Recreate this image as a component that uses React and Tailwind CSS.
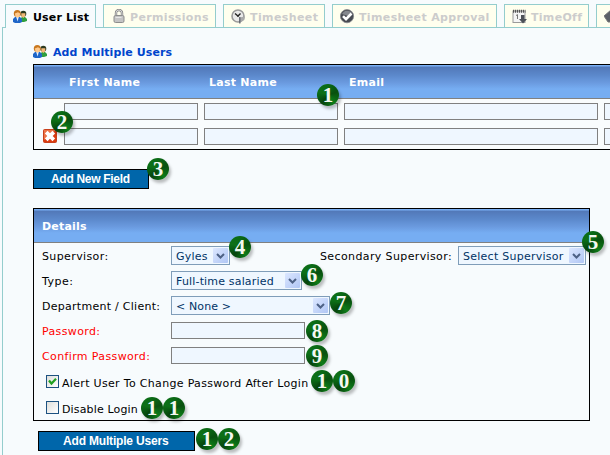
import React from "react";

function UsersIcon() {
  return (
    <svg className="h-[13px] w-[14px] shrink-0" viewBox="0 0 14 13">
      <path d="M7 12V9l2-2h3l2 2v2l-3 1z" fill="#2f9e3f" />
      <circle cx="10.3" cy="3.8" r="3" fill="#2c3a20" />
      <path d="M8.3 3.2h4v2.7l-1.8 2-2.2-1.5z" fill="#f0b878" />
      <path d="M0 12V9l2-2h5l2 2v3l-2 1H2z" fill="#1f66c8" />
      <path d="M3.2 7h2.6l-1.2 4.5z" fill="#e6f0fc" />
      <circle cx="4.3" cy="3.6" r="3.5" fill="#c87820" />
      <path d="M1.9 3.4 5 2.2l2.1 1.4-.5 3-2 1.2-2.1-1.4z" fill="#ffc98c" />
    </svg>
  );
}

function LockIcon() {
  return (
    <svg className="h-[15px] w-3 shrink-0" viewBox="0 0 12 15">
      <path d="M3 7V4a3 3 0 0 1 6 0v3" fill="none" stroke="#858585" strokeWidth="2.4" />
      <path d="M3 7V4a3 3 0 0 1 6 0v3" fill="none" stroke="#d5d5d5" strokeWidth="1" />
      <rect x="1" y="6.5" width="10" height="7" rx="1.5" fill="#c4c4c4" stroke="#8d8d8d" />
      <path d="M2.5 8.5h6" stroke="#e6e6e6" />
    </svg>
  );
}

function ClockIcon() {
  return (
    <svg className="h-[15px] w-[15px] shrink-0" viewBox="0 0 15 15">
      <circle cx="7" cy="7" r="6" fill="#e9e9e9" stroke="#9a9a9a" strokeWidth="1.6" />
      <path d="M4 4.5 7 7l2.5-2.5M7 7v1" fill="none" stroke="#222" strokeWidth="1.4" />
      <path d="M8.5 8.5 14 7.5l-.7 3.5-4.8 3z" fill="#a9a9a9" />
      <path d="M8.8 8V14.5" stroke="#555b66" strokeWidth="1.2" />
    </svg>
  );
}

function ApprovedIcon() {
  return (
    <svg className="h-[15px] w-[15px] shrink-0" viewBox="0 0 15 15">
      <circle cx="7" cy="7.2" r="6.6" fill="#484b52" stroke="#85878c" strokeWidth=".8" />
      <path d="M2 5a6 6 0 0 1 10-1L8 7z" fill="#85888e" />
      <path d="m3 7.2 3 3L11.5 4.5" fill="none" stroke="#fff" strokeWidth="2.6" />
    </svg>
  );
}

function CalendarIcon() {
  return (
    <svg className="h-[15px] w-[15px] shrink-0" viewBox="0 0 15 15">
      <rect x="1" y="2" width="12" height="11.5" fill="#f5f5f5" stroke="#9a9a9a" />
      <path d="M1 2.3h12.5" stroke="#555" strokeWidth="3" strokeDasharray="1.2 .8" />
      <path d="m4 6.6 1.5-1V10" fill="none" stroke="#777" />
      <path d="M9 6h3.5v4H15l-4 4.5L7 10h2z" fill="#4d5158" />
    </svg>
  );
}

const TAB =
  "flex h-[23px] shrink-0 items-center border border-b-0 border-[#94cdcd] pl-[7px] font-bold";

function Tab({ icon, width, iconBox, spacing, active, children }) {
  return (
    <div className={`${TAB} ${width} ${active ? "h-[24px] bg-[#f7fbfd] pb-px text-black" : "bg-[#ffffee] text-[#cccccc]"}`}>
      <span className={`flex shrink-0 ${iconBox}`}>{icon}</span>
      <span className={`pt-[2px] whitespace-nowrap ${spacing}`}>{children}</span>
    </div>
  );
}

const HEADER =
  "flex h-[34px] items-center border-b border-[#808080] bg-[linear-gradient(#79aff5_0px,#79aff5_1px,#5278b8_2px,#5b88cb_10px,#6b9be0_18px,#76adf2_24px,#76adf2_34px)] pt-[2px] font-bold text-white";

function Field({ className }) {
  return <div className={`h-[17px] shrink-0 border border-[#808080] bg-[#eff7ff] ${className}`} />;
}

function Select({ className, spacing, children }) {
  return (
    <div className={`flex h-[19px] shrink-0 items-center justify-between border border-[#7f9db9] bg-[#eff7ff] pr-px pl-1 text-[#003366] ${className}`}>
      <span className={`pt-[2px] whitespace-nowrap ${spacing}`}>{children}</span>
      <span className="flex h-[15px] w-[15px] items-center justify-center rounded-[1px] bg-linear-to-br from-[#dce7ff] to-[#b0c6f4]">
        <svg className="h-[6px] w-[9px]" viewBox="0 0 9 6">
          <path d="m1 1 3.5 3.5L8 1" fill="none" stroke="#4d6185" strokeWidth="2" />
        </svg>
      </span>
    </div>
  );
}

function Checkbox({ checked }) {
  return (
    <span className="flex h-[13px] w-[13px] shrink-0 items-center justify-center border border-[#1d5281] bg-linear-to-br from-[#dedfdb] to-white">
      {checked && (
        <svg className="h-[9px] w-[9px]" viewBox="0 0 9 9">
          <path d="m1 3.5 2.5 3L8 1.8" fill="none" stroke="#21a121" strokeWidth="2.2" />
        </svg>
      )}
    </span>
  );
}

function Button({ className, spacing, children }) {
  return (
    <div className={`flex h-5 items-center border border-black bg-[#0066aa] font-['Liberation_Sans',Arial,sans-serif] text-[12px] font-bold text-white ${className}`}>
      <span className={`whitespace-nowrap ${spacing}`}>{children}</span>
    </div>
  );
}

// Numbered callout discs; each one floats over the form controls.
function Callout({ className, children }) {
  return (
    <div className={`absolute flex h-[22px] w-[22px] items-center justify-center rounded-full bg-[conic-gradient(#0b6b16,#08500f,#0d7a18,#06440c,#0c7017,#0b6b16)] font-['Liberation_Serif','Times_New_Roman',serif] text-[21px] leading-[22px] font-bold text-[#f4f8f2] shadow-[2px_3px_3px_rgba(0,0,0,0.25)] ${className}`}>
      {children}
    </div>
  );
}

function UserRow({ removable }) {
  return (
    <div className="flex h-[17px] gap-[6px]">
      <div className="flex w-6 shrink-0 justify-end pr-px">
        {removable && (
          <svg className="mt-px h-[14px] w-[14px]" viewBox="0 0 14 14">
            <rect x=".5" y=".5" width="13" height="13" rx="1" fill="#dc3c10" stroke="#c8401c" />
            <path d="M1 1h12L1 11z" fill="#ec7448" />
            <path d="m3.2 3.2 7.6 7.6m0-7.6-7.6 7.6" stroke="#fff" strokeWidth="3.8" />
          </svg>
        )}
      </div>
      <Field className="w-[134px]" />
      <Field className="w-[134px]" />
      <Field className="w-[254px]" />
      <Field className="w-[134px]" />
    </div>
  );
}

function Label({ className, children }) {
  return <span className={`w-[129px] shrink-0 pt-[2px] whitespace-nowrap ${className}`}>{children}</span>;
}

export default function App() {
  return (
    <div className="relative h-[455px] w-[610px] overflow-hidden bg-[#f7fbfd] font-['DejaVu_Sans',Verdana,sans-serif] text-[11px] leading-[13px] text-black">
      <div className="flex h-7 items-start bg-[linear-gradient(#94cdcd,#94cdcd)] bg-[length:608px_1px] bg-[position:2px_27px] bg-no-repeat pt-1 pl-[5px]">
        <div className="flex gap-[7px]">
          <Tab active width="w-[91px]" iconBox="w-[20px]" spacing="tracking-[0.15px]" icon={<UsersIcon />}>User List</Tab>
          <Tab width="w-[113px]" iconBox="w-[19px] pl-[2px]" spacing="tracking-[0.35px]" icon={<LockIcon />}>Permissions</Tab>
          <Tab width="w-[102px]" iconBox="w-[19px]" spacing="tracking-[0.4px]" icon={<ClockIcon />}>Timesheet</Tab>
          <Tab width="w-[165px]" iconBox="w-[19px]" spacing="tracking-[0.36px]" icon={<ApprovedIcon />}>Timesheet Approval</Tab>
          <Tab width="w-[85px]" iconBox="w-[19px]" spacing="tracking-[0.3px]" icon={<CalendarIcon />}>TimeOff</Tab>
          <Tab
            width="w-[100px]"
            iconBox="w-[19px]"
            spacing=""
            icon={
              <svg className="h-[14px] w-[14px]" viewBox="0 0 14 14">
                <path d="m0 7 7-6 7 6-4 6H4z" fill="#5c6068" stroke="#777" />
              </svg>
            }
          />
        </div>
      </div>

      <div className="ml-[2px] h-[427px] border-l border-[#94cdcd] pl-[30px]">
        <div className="flex h-9 items-center gap-[6px] pt-[11px] font-bold text-[#0044cc]">
          <UsersIcon />
          <span className="pt-[2px] whitespace-nowrap tracking-[0.09px]">Add Multiple Users</span>
        </div>

        <div className="h-[86px] w-[700px] border border-black bg-[#f9fcfd]">
          <div className={HEADER}>
            <span className="ml-[35px] w-[140px] tracking-[0.35px]">First Name</span>
            <span className="w-[140px] tracking-[0.25px]">Last Name</span>
            <span className="tracking-[0.3px]">Email</span>
          </div>
          <div className="flex flex-col gap-2 pt-1">
            <UserRow />
            <UserRow removable />
          </div>
        </div>

        <Button className="mt-[19px] w-[116px] pl-[17px]" spacing="tracking-[-0.3px]">Add New Field</Button>

        <div className="mt-[19px] h-[213px] w-[557px] border border-black bg-[#f7fbfd]">
          <div className={HEADER}>
            <span className="ml-2 tracking-[0.2px]">Details</span>
          </div>
          <div className="pt-[3px] pl-2">
            <div className="flex h-[19px] items-center">
              <Label className="tracking-[0.38px]">Supervisor:</Label>
              <Select className="w-[59px]" spacing="tracking-[0.25px]">Gyles</Select>
              <span className="ml-[90px] w-[138px] pt-[2px] whitespace-nowrap tracking-[0.38px]">Secondary Supervisor:</span>
              <Select className="w-[128px]" spacing="tracking-[0.26px]">Select Supervisor</Select>
            </div>
            <div className="mt-[6px] flex h-[19px] items-center">
              <Label className="tracking-[0.5px]">Type:</Label>
              <Select className="w-[131px]" spacing="tracking-[0.17px]">Full-time salaried</Select>
            </div>
            <div className="mt-[6px] flex h-[19px] items-center">
              <Label className="tracking-[0.27px]">Department / Client:</Label>
              <Select className="w-[159px]" spacing="tracking-[0.12px]">&lt; None &gt;</Select>
            </div>
            <div className="mt-[7px] flex h-[17px] items-center">
              <Label className="tracking-[0.36px] text-[#ff0000]">Password:</Label>
              <Field className="w-[134px]" />
            </div>
            <div className="mt-2 flex h-[17px] items-center">
              <Label className="tracking-[0.37px] text-[#ff0000]">Confirm Password:</Label>
              <Field className="w-[134px]" />
            </div>
            <div className="mt-[11px] ml-1 flex h-[13px] gap-[3px]">
              <Checkbox checked />
              <span className="pt-[2px] whitespace-nowrap tracking-[0.32px]">Alert User To Change Password After Login</span>
            </div>
            <div className="mt-[13px] ml-1 flex h-[13px] gap-[3px]">
              <Checkbox />
              <span className="pt-[2px] whitespace-nowrap tracking-[0.15px]">Disable Login</span>
            </div>
          </div>
        </div>

        <Button className="mt-[10px] ml-[5px] w-[157px] pl-6" spacing="tracking-[-0.18px]">Add Multiple Users</Button>
      </div>

      <Callout className="top-[84px] left-[317px]">1</Callout>
      <Callout className="top-[111px] left-[51px]">2</Callout>
      <Callout className="top-[158px] left-[147px]">3</Callout>
      <Callout className="top-[236px] left-[229px]">4</Callout>
      <Callout className="top-[231px] left-[582px]">5</Callout>
      <Callout className="top-[264px] left-[301px]">6</Callout>
      <Callout className="top-[292px] left-[330px]">7</Callout>
      <Callout className="top-[320px] left-[306px]">8</Callout>
      <Callout className="top-[345px] left-[306px]">9</Callout>
      <Callout className="top-[370px] left-[311px]">1</Callout>
      <Callout className="top-[370px] left-[333px]">0</Callout>
      <Callout className="top-[397px] left-[141px]">1</Callout>
      <Callout className="top-[397px] left-[163px]">1</Callout>
      <Callout className="top-[428px] left-[196px]">1</Callout>
      <Callout className="top-[428px] left-[218px]">2</Callout>
    </div>
  );
}
